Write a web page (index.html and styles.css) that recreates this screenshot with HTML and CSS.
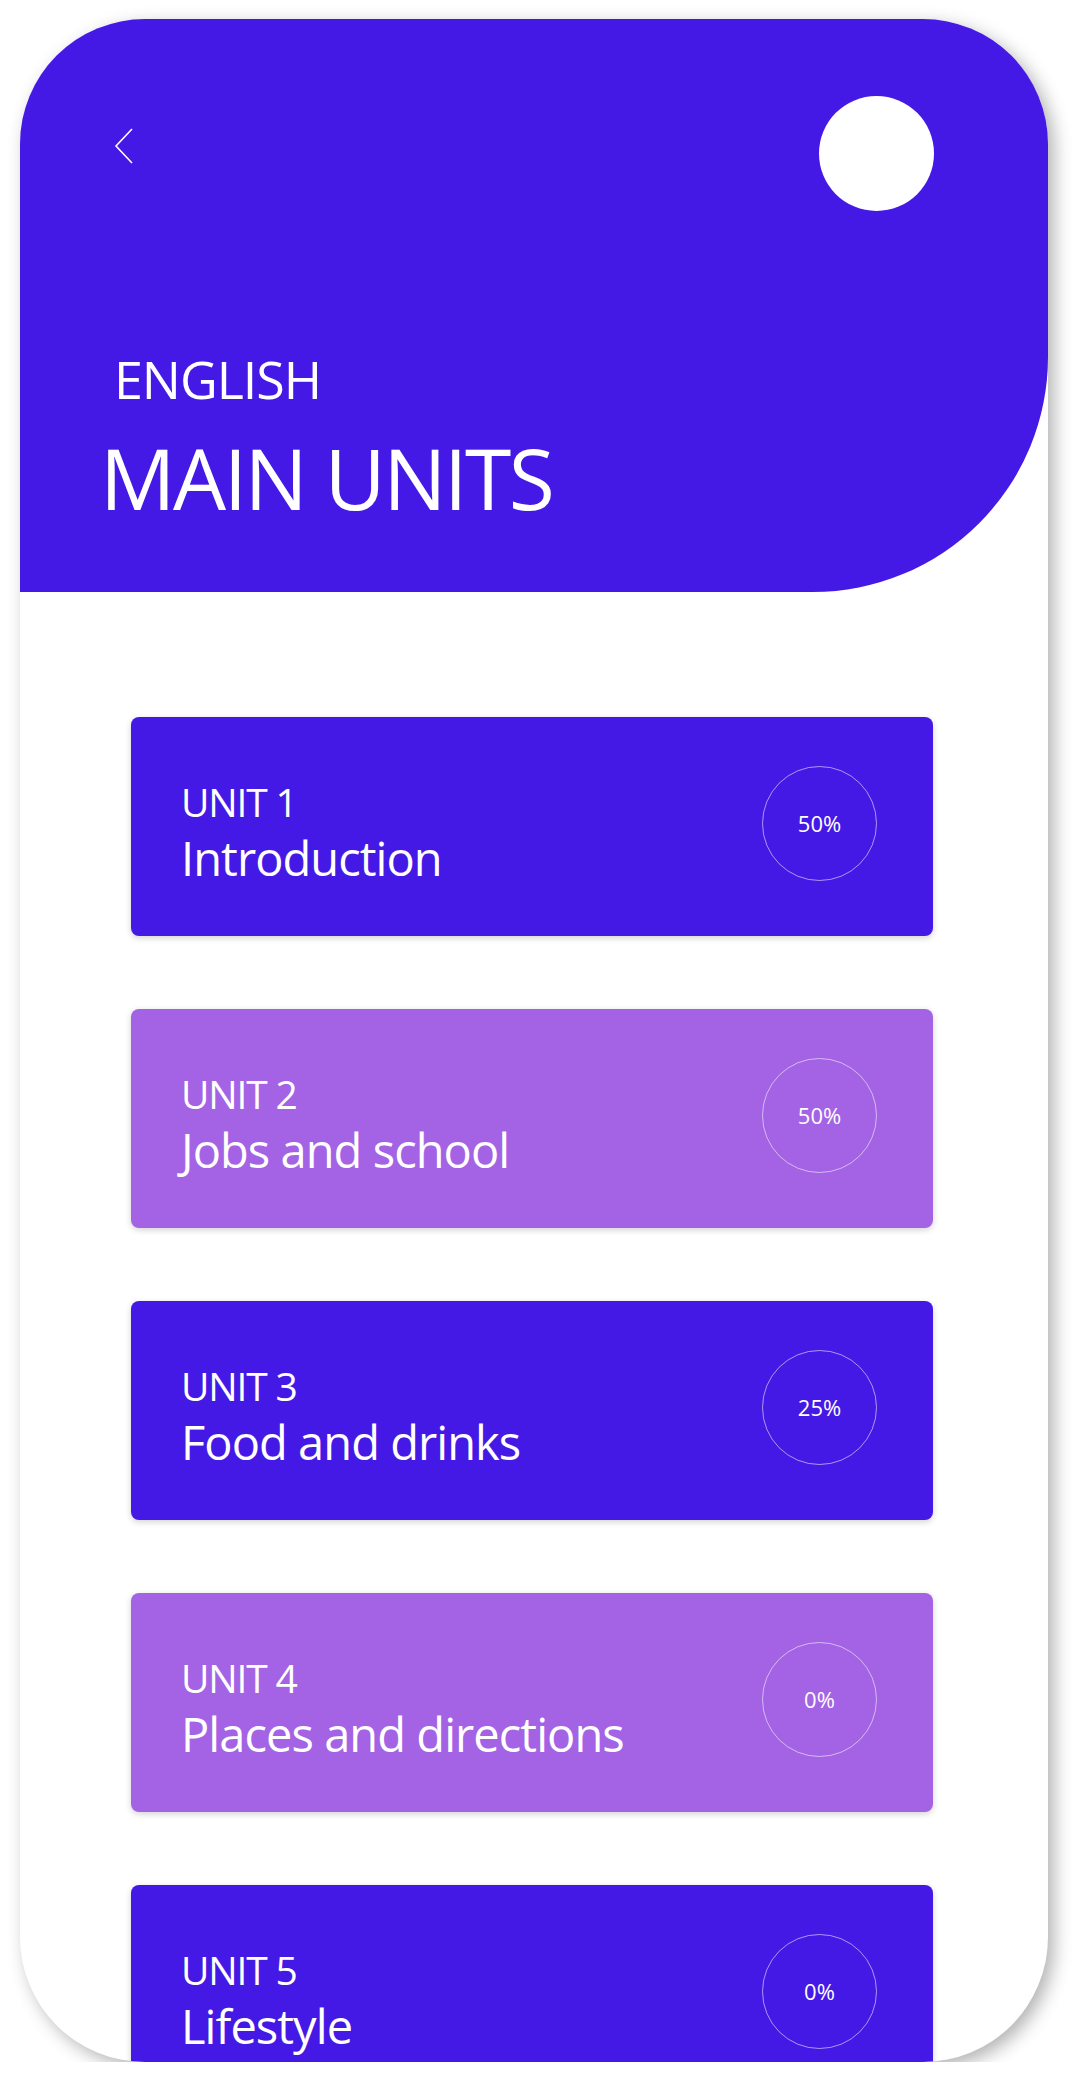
FILE: index.html
```html
<!DOCTYPE html>
<html lang="en">
<head>
  <meta charset="UTF-8">
  <meta name="viewport" content="width=device-width, initial-scale=1.0">
  <title>Main Units</title>
  <link rel="stylesheet" href="styles.css">
</head>
<body>
  <div class="phone">
    <!-- Header -->
    <header class="header">
      <div class="top-bar">
        <a href="javascript:window.history.back()" class="back-button">
          <svg width="20" height="36" viewBox="0 0 20 36">
            <polyline points="18,1 2,18 18,35" fill="none" stroke="#fff" stroke-width="1.6"/>
          </svg>
        </a>
        <div class="avatar"></div>
      </div>
      <p class="subject">ENGLISH</p>
      <h1 class="page-title">MAIN UNITS</h1>
    </header>

    <!-- Units -->
    <div class="unit-list">
      <div class="unit-card">
        <div class="unit-text">
          <p class="unit-number">UNIT 1</p>
          <p class="unit-name">Introduction</p>
        </div>
        <div class="progress">50%</div>
      </div>

      <div class="unit-card light">
        <div class="unit-text">
          <p class="unit-number">UNIT 2</p>
          <p class="unit-name">Jobs and school</p>
        </div>
        <div class="progress">50%</div>
      </div>

      <div class="unit-card">
        <div class="unit-text">
          <p class="unit-number">UNIT 3</p>
          <p class="unit-name">Food and drinks</p>
        </div>
        <div class="progress">25%</div>
      </div>

      <div class="unit-card light">
        <div class="unit-text">
          <p class="unit-number">UNIT 4</p>
          <p class="unit-name">Places and directions</p>
        </div>
        <div class="progress">0%</div>
      </div>

      <div class="unit-card">
        <div class="unit-text">
          <p class="unit-number">UNIT 5</p>
          <p class="unit-name">Lifestyle</p>
        </div>
        <div class="progress">0%</div>
      </div>
    </div>
  </div>
</body>
</html>
```

FILE: styles.css
```css
body {
  font-family: "Open Sans", Arial, sans-serif;
  background: #fff;
  margin: 0;
  color: #fff;
}

/* Phone frame */
.phone {
  width: 1028px;
  height: 2043px;
  margin: 19px 0 0 20px;
  background: #fff;
  border-radius: 125px;
  overflow: hidden;
  box-shadow: 6px 6px 18px rgba(0, 0, 0, 0.3);
}

/* Header */
.header {
  height: 573px;
  box-sizing: border-box;
  background: #4519e5;
  border-bottom-right-radius: 235px;
  padding: 77px 114px 0 94px;
}

.top-bar {
  display: flex;
  justify-content: space-between;
  align-items: flex-start;
}

.back-button {
  display: block;
  margin-top: 32px;
  line-height: 0;
}

.avatar {
  width: 115px;
  height: 115px;
  border-radius: 50%;
  background: #fff;
}

.subject {
  margin: 142px 0 0 0;
  font-size: 52px;
  line-height: 1;
  font-weight: 400;
  letter-spacing: -0.02em;
}

.page-title {
  margin: 31px 0 0 -14px;
  font-size: 84px;
  line-height: 1;
  font-weight: 400;
  letter-spacing: -0.03em;
}

/* Unit cards */
.unit-list {
  display: flex;
  flex-direction: column;
  gap: 73px;
  padding: 125px 115px 0 111px;
}

.unit-card {
  flex-shrink: 0;
  height: 219px;
  box-sizing: border-box;
  background: #4519e5;
  border-radius: 8px;
  padding: 0 56px 0 50px;
  display: flex;
  justify-content: space-between;
  align-items: center;
  box-shadow: 0 2px 6px rgba(0, 0, 0, 0.18);
}

.unit-card.light {
  background: #a463e4;
}

.unit-text {
  align-self: flex-start;
  margin-top: 65px;
}

.unit-number {
  margin: 0 0 14px 0;
  font-size: 39px;
  line-height: 1;
  letter-spacing: -0.03em;
}

.unit-name {
  margin: 0;
  font-size: 47px;
  line-height: 1;
  letter-spacing: -0.02em;
}

.progress {
  width: 113px;
  height: 113px;
  margin-bottom: 7px;
  border: 1px solid rgba(255, 255, 255, 0.55);
  border-radius: 50%;
  display: flex;
  justify-content: center;
  align-items: center;
  font-size: 22px;
}
```
